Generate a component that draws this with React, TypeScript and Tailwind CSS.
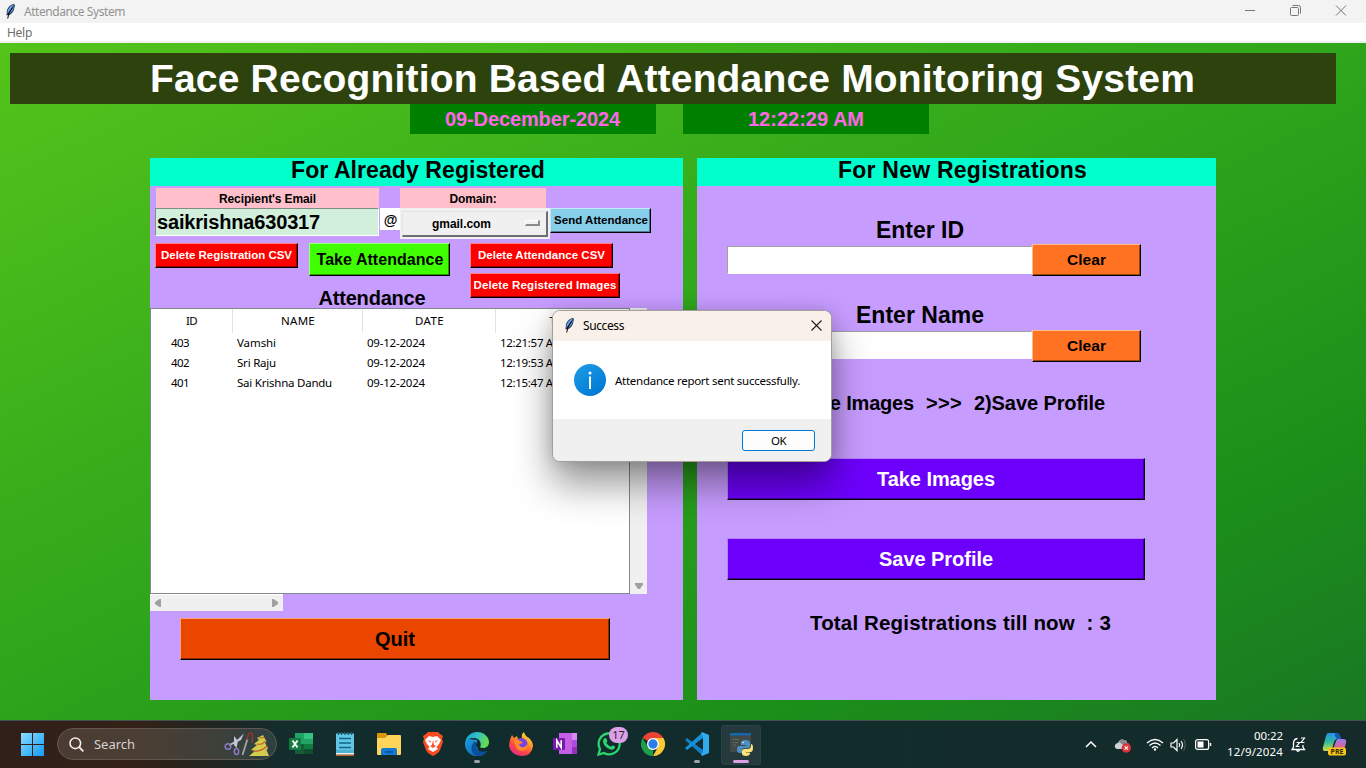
import React, { useLayoutEffect, useRef } from "react";

const ARIAL = "font-['Liberation_Sans',Arial,sans-serif] font-bold";
const SEGOE = "font-['Noto_Sans',sans-serif]";

/* Text set to an exact advance width by distributing letter spacing. */
function Fit({ w, children, className = "" }: { w: number; children: string; className?: string }) {
  const ref = useRef<HTMLSpanElement>(null);
  useLayoutEffect(() => {
    const el = ref.current;
    if (!el) return;
    el.style.letterSpacing = "0px";
    const natural = el.getBoundingClientRect().width;
    el.style.letterSpacing = `${(w - natural) / children.length}px`;
  }, [w, children]);
  return (
    <span ref={ref} className={"inline-block whitespace-pre " + className}>
      {children}
    </span>
  );
}

function Feather({ className = "" }: { className?: string }) {
  return (
    <svg viewBox="0 0 16 16" className={className}>
      <path d="M12.500 1C9.500 1 6 3.500 5 7.500L4.500 12.300 7 12.300C10 10.500 11.500 8.500 12 6.500L12.800 3z" fill="#1c3454" />
      <path d="M12 1.500C9.500 2 6.500 5 5.700 8L5.400 11 9.500 5z" fill="#6fa8ee" />
      <path d="M6.900 11.300C9.300 9.800 10.800 8 11.400 6L12.200 2.500z" fill="#5d97dd" />
      <path d="M10.500 4.500L7 10 5.700 15.500" fill="none" stroke="#0a0a0a" strokeWidth="1" />
    </svg>
  );
}

function Raised({ className, children }: { className: string; children: React.ReactNode }) {
  return (
    <button
      className={
        "flex shrink-0 items-center justify-center border border-r-black border-b-black border-t-white/50 border-l-white/50 leading-none shadow-[inset_-1px_-1px_0_rgba(0,0,0,0.4)] " +
        ARIAL + " " + className
      }
    >
      {children}
    </button>
  );
}

const ROWS = [
  ["403", "Vamshi", "09-12-2024", "12:21:57 AM"],
  ["402", "Sri Raju", "09-12-2024", "12:19:53 AM"],
  ["401", "Sai Krishna Dandu", "09-12-2024", "12:15:47 AM"],
];
const NAME_W = [39, 39, 95];

function Registered() {
  return (
    <section className="h-[542px] w-[533px] bg-[#c79cff]">
      <h2 className={"flex h-7 items-center justify-center bg-[#00ffcc] pt-px pb-[4px] pl-[3px] text-[23px] leading-none " + ARIAL}>
        <Fit w={254}>For Already Registered</Fit>
      </h2>
      <div className="flex pt-[2px] pl-[6px]">
        <div className={"flex h-5 w-[223px] items-center justify-center bg-[#ffc0cb] pt-px text-[12px] leading-none " + ARIAL}>
          <Fit w={97}>Recipient's Email</Fit>
        </div>
        <div className={"ml-[21px] flex h-5 w-[146px] items-center justify-center bg-[#ffc0cb] pt-px text-[12px] leading-none " + ARIAL}>
          <Fit w={47}>Domain:</Fit>
        </div>
      </div>
      <div className="flex h-[35px] items-start pl-[5px]">
        <div className={"flex h-7 w-[224px] items-center border border-t-[#7f8f86] border-l-[#7f8f86] border-r-white border-b-white bg-[#d2efdc] pl-px text-[20px] leading-none " + ARIAL}>
          <Fit w={163}>saikrishna630317</Fit>
        </div>
        <div className={"ml-px flex h-[22px] w-5 items-center justify-center bg-white pt-[2px] pl-px text-[14px] leading-none " + ARIAL}>@</div>
        <div className="flex h-[31px] w-[150px] items-center bg-[#f0f0f0] py-[2px] pr-[2px] pl-[2px]">
          <div className={"flex h-[26px] w-[146px] items-center border-t border-r-2 border-b-2 border-l border-t-[#e3e3e3] border-l-[#e3e3e3] border-r-[#6e6e6e] border-b-[#6e6e6e] pl-[29px] text-[12px] leading-none " + ARIAL}>
            <Fit w={59} className="pt-px">gmail.com</Fit>
            <div className="ml-[34px] h-[6px] w-[15px] border-t border-r-2 border-b-2 border-l border-t-white border-l-white border-r-[#8a8a8a] border-b-[#8a8a8a]" />
          </div>
        </div>
        <Raised className="h-[25px] w-[101px] bg-[#87ceeb] pl-px text-[11.5px]">
          <Fit w={94}>Send Attendance</Fit>
        </Raised>
      </div>
      <div className="flex h-[65px] items-start pl-[5px]">
        <Raised className="h-[25px] w-[143px] bg-[#ff0000] text-[11.5px] text-white">
          <Fit w={131}>Delete Registration CSV</Fit>
        </Raised>
        <div className="ml-[11px] flex w-[141px] flex-col items-center">
          <Raised className="h-[33px] w-[141px] bg-[#3fff00] pl-px text-[16px]">
            <Fit w={127}>Take Attendance</Fit>
          </Raised>
          <div className={"mt-[12px] ml-[-15px] h-[20px] text-[20px] leading-[20px] " + ARIAL}>
            <Fit w={107}>Attendance</Fit>
          </div>
        </div>
        <div className="ml-5 flex flex-col gap-[5px]">
          <Raised className="h-[25px] w-[143px] bg-[#ff0000] text-[11.5px] text-white">
            <Fit w={127}>Delete Attendance CSV</Fit>
          </Raised>
          <Raised className="h-[25px] w-[150px] bg-[#ff0000] text-[11.5px] text-white">
            <Fit w={143}>Delete Registered Images</Fit>
          </Raised>
        </div>
      </div>
      <div className="flex h-[286px]">
        <div className={"h-full w-[480px] border border-[#828790] bg-white text-[11.5px] leading-5 " + SEGOE}>
          <div className="flex h-6 text-center leading-[23px]">
            <div className="w-[82px] border-r border-[#e2e2e2]"><Fit w={11}>ID</Fit></div>
            <div className="w-[130px] border-r border-[#e2e2e2] pl-px"><Fit w={34}>NAME</Fit></div>
            <div className="w-[133px] border-r border-[#e2e2e2] pl-px"><Fit w={29}>DATE</Fit></div>
            <div className="w-[133px]"><Fit w={26}>TIME</Fit></div>
          </div>
          {ROWS.map((r, i) => (
            <div key={r[0]} className="flex h-5">
              <div className="w-[86px] pl-[20px]"><Fit w={18}>{r[0]}</Fit></div>
              <div className="w-[130px]"><Fit w={NAME_W[i]}>{r[1]}</Fit></div>
              <div className="w-[133px]"><Fit w={58}>{r[2]}</Fit></div>
              <div><Fit w={63}>{r[3]}</Fit></div>
            </div>
          ))}
        </div>
        <div className="flex h-full w-[17px] flex-col items-center justify-between bg-[#f0f0f0] py-[5px]">
          <svg className="h-[6px] w-[8px]" viewBox="0 0 8 6"><path d="M0 6L4 0 8 6z" fill="#a0a0a0" /></svg>
          <svg className="h-[6px] w-[8px]" viewBox="0 0 8 6"><path d="M0 0H8V1.500L5 6H3L0 1.500z" fill="#a0a0a0" /></svg>
        </div>
      </div>
      <div className="flex h-[17px] w-[133px] items-center justify-between border-t border-white bg-[#f0f0f0] px-[5px]">
        <svg className="h-2 w-[6px]" viewBox="0 0 6 8"><path d="M6 0V8H4.500L0 5V3L4.500 0z" fill="#a0a0a0" /></svg>
        <svg className="h-2 w-[6px]" viewBox="0 0 6 8"><path d="M0 0V8H1.500L6 5V3L1.500 0z" fill="#a0a0a0" /></svg>
      </div>
      <Raised className="mt-[7px] ml-[30px] h-[42px] w-[430px] bg-[#eb4600] text-[20px]">
        <Fit w={40}>Quit</Fit>
      </Raised>
    </section>
  );
}

function ClearField({ top }: { top: string }) {
  return (
    <div className="flex h-8 items-start">
      <div className={"h-7 w-[305px] border border-t-[#a0a0a0] border-l-[#a0a0a0] border-r-white border-b-white bg-white " + top} />
      <Raised className="h-8 w-[109px] bg-[#ff7221] pb-px text-[15.5px]">
        <Fit w={39}>Clear</Fit>
      </Raised>
    </div>
  );
}

function NewRegistration() {
  return (
    <section className="ml-[14px] h-[542px] w-[519px] bg-[#c79cff]">
      <h2 className={"flex h-7 items-center justify-center bg-[#00ffcc] pt-px pb-[4px] pl-[12px] text-[23px] leading-none " + ARIAL}>
        <Fit w={249}>For New Registrations</Fit>
      </h2>
      <div className={"pl-[30px] " + ARIAL}>
        <div className="flex h-[58px] w-[386px] items-end justify-center pb-[2px] text-[23px] leading-[23px]">
          <Fit w={88}>Enter ID</Fit>
        </div>
        <ClearField top="mt-[2px]" />
        <div className="flex h-[54px] w-[386px] items-end justify-center pb-[3px] text-[23px] leading-[23px]">
          <Fit w={128}>Enter Name</Fit>
        </div>
        <ClearField top="mt-px" />
        <div className="flex h-[96px] w-[378px] items-start justify-end pt-[31px] text-[20px] leading-5">
          <Fit w={134}>1)Take Images</Fit>
          <Fit w={36} className="ml-[12px]">{">>>"}</Fit>
          <Fit w={131} className="ml-[12px]">2)Save Profile</Fit>
        </div>
        <Raised className="h-[42px] w-[418px] bg-[#6d00fc] text-[20px] text-white">
          <Fit w={118}>Take Images</Fit>
        </Raised>
        <Raised className="mt-[38px] h-[42px] w-[418px] bg-[#6d00fc] text-[20px] text-white">
          <Fit w={114}>Save Profile</Fit>
        </Raised>
        <div className="flex h-[60px] w-[467px] justify-center pt-[33px] text-[20.5px] leading-5">
          <Fit w={301}>{"Total Registrations till now  : 3"}</Fit>
        </div>
      </div>
    </section>
  );
}

function SuccessDialog() {
  return (
    <div className={"absolute top-[310px] left-[552px] flex h-[152px] w-[280px] flex-col overflow-visible rounded-lg border border-[#a59d9c] bg-white shadow-[0_22px_38px_rgba(0,0,0,0.42),0_0_16px_rgba(0,0,0,0.14)] " + SEGOE}>
      <div className="flex h-[30px] items-center rounded-t-[7px] bg-[#f9f1e9] pl-[8px] text-[12px]">
        <Feather className="mt-[-2px] h-4 w-4" />
        <Fit w={41} className="ml-[6px]">Success</Fit>
        <svg className="mt-[-2px] mr-[9px] ml-auto h-[11px] w-[11px]" viewBox="0 0 11 11"><path d="M.5.5L10.500 10.500M10.500.5L.5 10.500" stroke="#1c1c1c" strokeWidth="1.100" fill="none" /></svg>
      </div>
      <div className="flex h-[78px] items-center pl-[21px] text-[11.5px] text-black">
        <svg className="h-8 w-8" viewBox="0 0 32 32">
          <defs><linearGradient id="info" x1="0" y1="0" x2="0.700" y2="1"><stop offset="0" stopColor="#1e9fe6" /><stop offset="1" stopColor="#0078d4" /></linearGradient></defs>
          <circle cx="16" cy="16" r="16" fill="url(#info)" />
          <circle cx="16" cy="9" r="1.500" fill="#fff" /><path d="M16 12.500V25" stroke="#fff" strokeWidth="2" />
        </svg>
        <Fit w={185} className="ml-[9px] pt-[2px]">Attendance report sent successfully.</Fit>
      </div>
      <div className="flex h-[42px] items-center justify-end rounded-b-[7px] bg-[#f0f0f0] pr-[16px]">
        <button className="flex h-[21px] w-[73px] items-center justify-center rounded-[3px] border border-[#0078d4] bg-[#fdfdfd] pt-px text-[11.5px]"><Fit w={15}>OK</Fit></button>
      </div>
    </div>
  );
}

function Slot({ children, run = "", active = false }: { children: React.ReactNode; run?: string; active?: boolean }) {
  return (
    <div className="flex w-11 shrink-0 justify-center">
      <div className={"flex h-10 w-10 flex-col items-center rounded pt-[7px] " + (active ? "bg-[#243a3c] shadow-[inset_0_0_0_1px_#2d4244]" : "")}>
        <div className="h-6 w-6">{children}</div>
        {run && <div className={"mt-[4px] h-[3px] rounded-full " + run} />}
      </div>
    </div>
  );
}

function Taskbar() {
  return (
    <footer className={"flex h-12 items-center border-t border-[#46524f] bg-[linear-gradient(90deg,#30201a_0px,#332117_130px,#22251f_210px,#142c2c_275px,#112c2d_450px,#142b2a_1366px)] text-white " + SEGOE}>
      <svg className="ml-[21px] h-[23px] w-[23px]" viewBox="0 0 23 23">
        <defs><linearGradient id="win" x1="0" y1="0" x2="1" y2="1"><stop offset="0" stopColor="#8bdcff" /><stop offset="1" stopColor="#119bf5" /></linearGradient></defs>
        <path d="M0 0H11V11H0zM12 0H23V11H12zM0 12H11V23H0zM12 12H23V23H12z" fill="url(#win)" />
      </svg>
      <div className="mb-px ml-[13px] flex h-8 w-[220px] items-center rounded-full border border-[#615951] bg-[linear-gradient(90deg,#4a3c33_0px,#4b3e34_90px,#3c403b_165px,#2c4141_220px)] pl-[11px]">
        <svg className="h-[15px] w-[15px]" viewBox="0 0 15 15"><circle cx="6.300" cy="6.300" r="5.300" fill="none" stroke="#f1eeec" strokeWidth="1.600" /><path d="M10.200 10.200L14.400 14.400" stroke="#f1eeec" strokeWidth="1.900" /></svg>
        <Fit w={41} className="ml-[10px] pt-px text-[13px] text-[#d8d2ce]">Search</Fit>
        <svg className="ml-[89px] h-[26px] w-[46px]" viewBox="0 0 46 26">
          <path d="M10 5L14 10 12.500 17 10 14zM20 2.500L17 9 5.500 15 5 13.500 13 9z" fill="#c3c6d6" />
          <circle cx="4" cy="15.500" r="2.800" fill="none" stroke="#8c78c8" strokeWidth="1.500" /><ellipse cx="12.500" cy="20.500" rx="2.200" ry="3" fill="none" stroke="#8c78c8" strokeWidth="1.500" />
          <path d="M23.500 8L18.500 24" stroke="#a9a9b5" strokeWidth="1.700" /><path d="M23.500 9C23.500 1 28 0 28.500 4L28 12" fill="none" stroke="#a8322a" strokeWidth="1.300" />
          <path d="M39 4L41 8 42.500 10 41 12 44 17 42.500 19 45 25H25L31 20 27 19 33 14 30 13 35 9 33 7z" fill="#d2cc4c" />
          <path d="M33 13C37 14 40 12 41 10M29 20C36 21 41 17 43 15M35 7L40.500 6.500" fill="none" stroke="#c45832" strokeWidth="1.100" />
        </svg>
      </div>
      <div className="ml-[2px] flex">
        <Slot>
          <svg viewBox="0 0 24 24"><path d="M6 1H24V22H6z" fill="#21a366" /><path d="M15 1H24V7H15z" fill="#33c481" /><path d="M15 12H24V17H15z" fill="#107c41" /><path d="M6 12H15V22H6z" fill="#185c37" /><path d="M15 17H24V22H15z" fill="#134d30" /><rect y="6" width="12" height="12" rx="1" fill="#107c41" /><path d="M3.500 8.500L8.500 15.500M8.500 8.500L3.500 15.500" stroke="#fff" strokeWidth="1.900" /></svg>
        </Slot>
        <Slot>
          <svg viewBox="0 0 24 24"><path d="M3 1.500H21V23H3z" fill="#61c7e5" /><path d="M3 18H21V21H3z" fill="#4cb1d2" /><path d="M3 21H21V22.500H3z" fill="#f0f2ef" /><path d="M3 22.500H21V24H3z" fill="#bd622a" /><path d="M6 6.500H18M6 11H18M6 15.500H18" stroke="#146585" strokeWidth="1.400" /><path d="M5.500 0V3M8.700 0V3M12 0V3M15.200 0V3M18.500 0V3" stroke="#175d76" strokeWidth="1.300" /></svg>
        </Slot>
        <Slot>
          <svg viewBox="0 0 24 24"><path d="M0 2Q0 1 1 1H9L11 4V9H0z" fill="#dc9608" /><path d="M0 6H8L11 3H23Q24 3 24 4V22Q24 23 23 23H1Q0 23 0 22z" fill="#ffd45a" /><path d="M4 23V18Q4 16 6 16H18Q20 16 20 18V23z" fill="#1479d1" /><path d="M8 20H16" stroke="#08509b" strokeWidth="1.400" /></svg>
        </Slot>
        <Slot>
          <svg viewBox="0 0 24 24"><path d="M7 0H17L19 2 22 4 21 7 22 10 19 18Q18 21 12 24Q6 21 5 18L2 10 3 7 2 4 5 2z" fill="#fb4b20" /><path d="M8 4L12 5 16 4 20 8 18 12 15.500 15 17 17 12 20 7 17 8.500 15 6 12 4 8z" fill="#fff" /><path d="M6.500 8L10 9.200 9.500 10.500zM17.500 8L14 9.200 14.500 10.500zM12 8L13 13 15 14 12 16 9 14 11 13z" fill="#fb4b20" /></svg>
        </Slot>
        <Slot run="w-[6px] bg-[#9aa4a4]">
          <svg viewBox="0 0 24 24">
            <defs>
              <linearGradient id="edge" x1="0" y1="0" x2="1" y2="0.300"><stop stopColor="#159ce2" /><stop offset=".55" stopColor="#34c1c5" /><stop offset="1" stopColor="#66dc4c" /></linearGradient>
              <linearGradient id="edge2" x1="0" y1="0" x2="1" y2="1"><stop stopColor="#1b9de2" /><stop offset="1" stopColor="#0c59a4" /></linearGradient>
            </defs>
            <path d="M0 12A12 12 0 0 0 22 19Q17 22 13 18L12 8 4 7Q0 8 0 12z" fill="url(#edge2)" />
            <path d="M0 11C1 4 6 0 12 0C19 0 24 5 24 10C24 15 20 17 15 15.500C17 12 15 6 9 6C4 6 1 8 0 11z" fill="url(#edge)" />
            <path d="M9 10C4 16 7 24 14 24C18 24 21 21.500 22.500 18.500C15 22 10 17 11 13C11.500 10 10.500 9 9 10z" fill="#0a4f9b" />
            <path d="M11 13C10.500 9.500 15 9.500 15 12.500C15 14 13.500 14.500 14.500 15.500C17 17.500 21 17 23 15.500C21.500 19 12 18.500 11 13z" fill="#132b2e" />
          </svg>
        </Slot>
        <Slot>
          <svg viewBox="0 0 24 24">
            <defs><linearGradient id="fox" x1="0.900" y1="0" x2="0.300" y2="1"><stop stopColor="#fff044" /><stop offset=".4" stopColor="#ff9a22" /><stop offset=".7" stopColor="#ff4747" /><stop offset="1" stopColor="#e32b84" /></linearGradient></defs>
            <path d="M3 3L5 6 8 4 9 7 13 6Q12 2 15 0Q16 4 20 6Q24 10 24 14Q23 24 12 24Q2 23 0 14Q0 8 3 3z" fill="url(#fox)" /><circle cx="12.500" cy="12" r="6" fill="#7543e5" /><path d="M5 8Q8 6 11 9L14 10Q13 12 10 12Q11 16 15 15Q18 14 18 11Q20 19 12 19Q6 18 5 8z" fill="#ff8a2a" />
          </svg>
        </Slot>
        <Slot>
          <svg viewBox="0 0 24 24"><path d="M6 1H24V22H6z" fill="#c45ee4" /><path d="M19 1H24V8H19z" fill="#d78aef" /><path d="M19 8H24V15H19z" fill="#ae4ddd" /><path d="M19 15H24V22H19z" fill="#9332bf" /><rect y="6" width="12" height="12" rx="1" fill="#7719aa" /><path d="M3.800 15.700V8.300L8.200 15.700V8.300" stroke="#fff" strokeWidth="1.600" fill="none" /></svg>
        </Slot>
        <Slot>
          <div className="relative h-6 w-6">
            <svg viewBox="0 0 24 24"><path d="M1.500 22.500L3 17A10.500 10.500 0 1 1 7 21z" fill="none" stroke="#2bd46c" strokeWidth="2.300" /><path d="M7 6.500L9 6 10.500 9 9.300 10.700Q11 14 14 14.700L15.700 13.300 18.300 15Q17 18.500 13.500 17.500Q7.500 15.500 6 10Q5.800 8 7 6.500z" fill="#2bd46c" /></svg>
            <div className="absolute top-[-5px] left-[12px] flex h-[16px] w-[19px] items-center justify-center rounded-full bg-[#dda0e8] text-[11px] leading-none text-[#29242c]">17</div>
          </div>
        </Slot>
        <Slot>
          <svg viewBox="0 0 24 24"><path d="M12 12L1.600 6A12 12 0 0 1 22.400 6z" fill="#ea4335" /><path d="M12 12L12 24A12 12 0 0 1 1.600 6L7 15z" fill="#1e9e4b" /><path d="M12 6H22.400A12 12 0 0 1 12 24L17 15z" fill="#fcc934" /><circle cx="12" cy="12" r="6" fill="#fff" /><circle cx="12" cy="12" r="4.700" fill="#2b7de9" /></svg>
        </Slot>
        <Slot run="w-[6px] bg-[#9aa4a4]">
          <svg viewBox="0 0 24 24"><path d="M0 8L2 6 18 18V24z" fill="#137ec5" /><path d="M0 16L2 18 18 6V0z" fill="#1690d6" /><path d="M17 0L24 3V21L17 24 16 22 18 20V4L16 2z" fill="#30a9ef" /></svg>
        </Slot>
        <Slot active run="w-4 bg-[#dda0e8]">
          <svg viewBox="0 0 24 24"><path d="M1 1H22V20H1z" fill="#43494a" /><path d="M1 1H22V3.500H1z" fill="#1568ab" /><path d="M4 7.500H10M4 10.500H9M4 13H7" stroke="#4f734c" strokeWidth="1" /><path d="M16 8Q12 8 12 11V13H17V14H10Q8 14 8 18Q8 21 11 21H13V18Q13 16 15 16H19Q21 16 21 14V11Q21 8 16 8z" fill="#4b8fc4" /><path d="M17 24Q21 24 21 21V20.500H17V20H22Q24 19.500 24 16Q24 12 22 12V14.500Q21.500 17 19 17H15.500Q13 17 13 19.500V21.500Q13 24 17 24z" fill="#ffe277" /><circle cx="14" cy="10.500" r=".8" fill="#fff" /></svg>
        </Slot>
      </div>
      <svg className="mb-px ml-[322px] h-[8px] w-[12px]" viewBox="0 0 12 8"><path d="M1 7L6 2 11 7" stroke="#fff" strokeWidth="1.500" fill="none" /></svg>
      <svg className="ml-[17px] h-[16px] w-[18px]" viewBox="0 0 18 16"><path d="M4 12Q0 12 1 8Q2 6 4 6Q6 1 10 3Q13 3 13 6Q17 7 15 12z" fill="#d0d3d5" /><path d="M5 5Q7 1 10 3Q13 3 13 6Q16 7 15 11L9 8z" fill="#85898c" /><circle cx="12.300" cy="11" r="4.700" fill="#df333c" /><path d="M10.600 9.300L14 12.700M14 9.300L10.600 12.700" stroke="#fff" strokeWidth="1.200" /></svg>
      <svg className="ml-[14px] h-[14px] w-[18px]" viewBox="0 0 18 14"><path d="M1 5Q9-2 17 5M3.500 7.500Q9 2.500 14.500 7.500M6 10Q9 7 12 10" stroke="#fff" strokeWidth="1.300" fill="none" /><circle cx="9" cy="11.500" r="1.200" fill="#fff" /></svg>
      <svg className="ml-[6px] h-[14px] w-[17px]" viewBox="0 0 17 14"><path d="M1 5H3.500L7 1.500V12.500L3.500 9H1zM9 5Q10.500 7 9 9M11 3Q14 7 11 11" stroke="#fff" strokeWidth="1.200" fill="none" /><path d="M13.500 1Q17 7 13.500 13" stroke="#536564" fill="none" /></svg>
      <svg className="ml-[8px] h-[11px] w-[17px]" viewBox="0 0 17 11"><rect x=".6" y=".6" width="13" height="9.800" rx="2" fill="none" stroke="#fff" strokeWidth="1.200" /><rect x="2.500" y="2.500" width="6" height="6" fill="#fff" /><path d="M15.500 4V7" stroke="#fff" strokeWidth="1.500" /></svg>
      <div className="ml-[14px] flex w-[57px] flex-col items-end pb-px text-[11.5px] leading-4">
        <Fit w={29}>00:22</Fit>
        <Fit w={56}>12/9/2024</Fit>
      </div>
      <svg className="ml-[8px] h-[16px] w-[15px]" viewBox="0 0 15 16"><path d="M6.500 1.500Q2.500 2 2.500 6.500V10L1 12.500H13.500L12 10V8M5.500 13Q7 15.500 8.500 13" stroke="#fff" strokeWidth="1.300" fill="none" /><path d="M5.500 5.500H8.500L5.500 9.500H8.500M10 1H13.500L10 5.500H13.500" stroke="#fff" strokeWidth="1.200" fill="none" /></svg>
      <svg className="ml-[16px] h-[25px] w-[25px]" viewBox="0 0 25 25">
        <defs><linearGradient id="cp" x1="0" y1="0" x2="0" y2="1"><stop stopColor="#2490ed" /><stop offset=".5" stopColor="#31bb9b" /><stop offset="1" stopColor="#d5de3e" /></linearGradient><linearGradient id="cp2" x1="0" y1="0" x2="0" y2="1"><stop stopColor="#9b78ee" /><stop offset="1" stopColor="#f0637c" /></linearGradient></defs>
        <path d="M6 1H15Q17 1 18 4L19 7H15Q13 7 12 10L10 17Q9 19 6 19H3Q0 19 1 15L4 4Q5 1 6 1z" fill="url(#cp)" /><path d="M13 1H15Q17 1 18 4L19 7H15L13 4z" fill="#1857b8" /><path d="M16 7H21Q25 7 24 11L22 18H11L14 9Q15 7 16 7z" fill="url(#cp2)" />
        <rect x="6" y="15.500" width="18" height="8" rx="2" fill="#f6c51b" /><text x="15" y="22.100" textAnchor="middle" fontSize="7" fontWeight="700" fill="#302405">PRE</text>
      </svg>
    </footer>
  );
}

export default function App() {
  return (
    <div className="relative flex h-[768px] w-[1366px] flex-col overflow-hidden text-black">
      <header className={"flex h-[23px] shrink-0 items-center bg-[#f3f3f3] pl-[2px] text-[12px] text-[#929292] " + SEGOE}>
        <Feather className="mt-[-2px] h-4 w-4" />
        <Fit w={101} className="ml-[6px] pt-px">Attendance System</Fit>
        <svg className="mb-[2px] ml-auto h-[11px] w-[105px]" viewBox="0 0 105 11"><path d="M3 5.500H13" stroke="#777" /><path d="M49.500 2.500H55.500Q56.500 2.500 56.500 3.500V9.500Q56.500 10.500 55.500 10.500H49.500Q48.500 10.500 48.500 9.500V3.500Q48.500 2.500 49.500 2.500M50.500.5H56.500Q58.500.5 58.500 2.500V8.500" stroke="#777" fill="none" /><path d="M94 .5L104 10.500M104 .5L94 10.500" stroke="#777" /></svg>
        <div className="w-[19px]" />
      </header>
      <nav className={"flex h-5 shrink-0 items-center border-b-2 border-[#f0f0f0] bg-white pt-px pl-[7px] text-[12px] text-[#6d6d6d] " + SEGOE}>
        <Fit w={25}>Help</Fit>
      </nav>
      <main className="h-[677px] shrink-0 bg-[linear-gradient(155deg,#54c41b_0%,#2da41b_50%,#1b8e1a_79%,#1a7824_100%)] pt-[10px]">
        <h1 className={"ml-[10px] flex h-[51px] w-[1326px] items-center bg-[#2d420d] pl-[140px] text-[39px] leading-none text-white " + ARIAL}>
          <Fit w={1045}>Face Recognition Based Attendance Monitoring System</Fit>
        </h1>
        <div className={"ml-[410px] flex h-[30px] gap-[27px] text-[20px] leading-none text-[#ff66e5] " + ARIAL}>
          <div className="flex h-[30px] w-[246px] items-center justify-center bg-[#008000] pr-px"><Fit w={175}>09-December-2024</Fit></div>
          <div className="flex h-[30px] w-[246px] items-center justify-center bg-[#008000]"><Fit w={116}>12:22:29 AM</Fit></div>
        </div>
        <div className="mt-6 ml-[150px] flex">
          <Registered />
          <NewRegistration />
        </div>
      </main>
      <Taskbar />
      <SuccessDialog />
    </div>
  );
}
